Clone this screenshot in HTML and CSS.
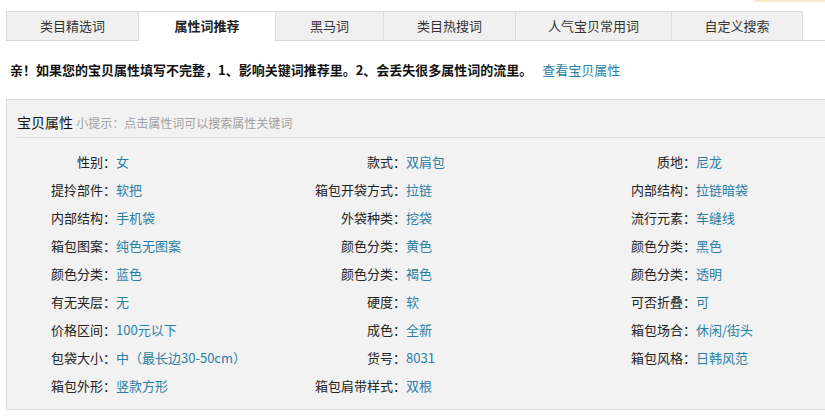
FILE: index.html
```html
<!DOCTYPE html>
<html lang="zh-CN">
<head>
    <meta charset="UTF-8">
    <title>属性词推荐</title>
    <link rel="stylesheet" href="styles.css">
</head>
<body>
    <div class="peek"></div>
    <div class="page">
        <!-- 标签切换 -->
        <ul class="tabs">
            <li class="tab w132">类目精选词</li>
            <li class="tab w137 active">属性词推荐</li>
            <li class="tab w108">黑马词</li>
            <li class="tab w132">类目热搜词</li>
            <li class="tab w156">人气宝贝常用词</li>
            <li class="tab w132 last">自定义搜索</li>
        </ul>

        <p class="notice">亲！如果您的宝贝属性填写不完整，1、影响关键词推荐里。2、会丢失很多属性词的流里。<a href="#" class="notice-link">查看宝贝属性</a></p>

        <!-- 宝贝属性 -->
        <div class="panel">
            <div class="panel-title">宝贝属性 <span class="hint">小提示：点击属性词可以搜索属性关键词</span></div>
            <div class="props">
                <div class="prop"><span class="label">性别：</span><a href="#" class="value">女</a></div>
                <div class="prop"><span class="label">款式：</span><a href="#" class="value">双肩包</a></div>
                <div class="prop"><span class="label">质地：</span><a href="#" class="value">尼龙</a></div>

                <div class="prop"><span class="label">提拎部件：</span><a href="#" class="value">软把</a></div>
                <div class="prop"><span class="label">箱包开袋方式：</span><a href="#" class="value">拉链</a></div>
                <div class="prop"><span class="label">内部结构：</span><a href="#" class="value">拉链暗袋</a></div>

                <div class="prop"><span class="label">内部结构：</span><a href="#" class="value">手机袋</a></div>
                <div class="prop"><span class="label">外袋种类：</span><a href="#" class="value">挖袋</a></div>
                <div class="prop"><span class="label">流行元素：</span><a href="#" class="value">车缝线</a></div>

                <div class="prop"><span class="label">箱包图案：</span><a href="#" class="value">纯色无图案</a></div>
                <div class="prop"><span class="label">颜色分类：</span><a href="#" class="value">黄色</a></div>
                <div class="prop"><span class="label">颜色分类：</span><a href="#" class="value">黑色</a></div>

                <div class="prop"><span class="label">颜色分类：</span><a href="#" class="value">蓝色</a></div>
                <div class="prop"><span class="label">颜色分类：</span><a href="#" class="value">褐色</a></div>
                <div class="prop"><span class="label">颜色分类：</span><a href="#" class="value">透明</a></div>

                <div class="prop"><span class="label">有无夹层：</span><a href="#" class="value">无</a></div>
                <div class="prop"><span class="label">硬度：</span><a href="#" class="value">软</a></div>
                <div class="prop"><span class="label">可否折叠：</span><a href="#" class="value">可</a></div>

                <div class="prop"><span class="label">价格区间：</span><a href="#" class="value">100元以下</a></div>
                <div class="prop"><span class="label">成色：</span><a href="#" class="value">全新</a></div>
                <div class="prop"><span class="label">箱包场合：</span><a href="#" class="value">休闲/街头</a></div>

                <div class="prop"><span class="label">包袋大小：</span><a href="#" class="value">中（最长边30-50cm）</a></div>
                <div class="prop"><span class="label">货号：</span><a href="#" class="value">8031</a></div>
                <div class="prop"><span class="label">箱包风格：</span><a href="#" class="value">日韩风范</a></div>

                <div class="prop"><span class="label">箱包外形：</span><a href="#" class="value">竖款方形</a></div>
                <div class="prop"><span class="label">箱包肩带样式：</span><a href="#" class="value">双根</a></div>
            </div>
        </div>
    </div>
</body>
</html>
```

FILE: styles.css
```css
* {
    box-sizing: border-box;
}
body {
    margin: 0;
    background: #fff;
    color: #222;
    font-family: "Noto Sans CJK SC", "Liberation Sans", sans-serif;
    font-size: 13px;
    overflow: hidden;
}
a {
    text-decoration: none;
}
.peek {
    position: absolute;
    top: 0;
    right: 0;
    width: 70px;
    height: 2px;
    background: #f3eac8;
}
.page {
    padding: 11px 0 0 6px;
}

/* tabs */
.tabs {
    display: flex;
    margin: 0;
    padding: 0;
    list-style: none;
    border-bottom: 1px solid #d6d6d6;
}
.tab {
    height: 29px;
    line-height: 28px;
    text-align: center;
    color: #333;
    background: #f0f0f0;
    border-top: 1px solid #dcdcdc;
    border-left: 1px solid #dcdcdc;
    cursor: pointer;
}
.tab.last {
    border-right: 1px solid #dcdcdc;
}
.tab.active {
    background: #fff;
    font-weight: bold;
    color: #222;
    height: 30px;
    margin-bottom: -1px;
}
.w108 { width: 108px; }
.w132 { width: 132px; }
.w137 { width: 137px; }
.w156 { width: 156px; }

/* notice */
.notice {
    margin: 0;
    padding: 18px 0 0 4px;
    height: 58px;
    line-height: 22px;
    font-weight: bold;
    color: #111;
}
.notice-link {
    font-weight: normal;
    color: #2a7fa6;
    margin-left: 10px;
}

/* panel */
.panel {
    background: #f2f2f2;
    border: 1px solid #dcdcdc;
    border-right: none;
    height: 311px;
}
.panel-title {
    margin-left: 10px;
    padding: 10px 0 2px;
    line-height: 24px;
    border-bottom: 1px solid #dedede;
    font-size: 14px;
    color: #111;
}
.hint {
    font-size: 12px;
    color: #a0a0a0;
}
.props {
    display: grid;
    grid-template-columns: 290px 290px 1fr;
    grid-auto-rows: 28px;
    padding: 9px 0 0 9px;
}
.prop {
    display: flex;
    align-items: center;
}
.label {
    width: 100px;
    text-align: right;
    color: #222;
}
.value {
    color: #2a7fa6;
}
```
